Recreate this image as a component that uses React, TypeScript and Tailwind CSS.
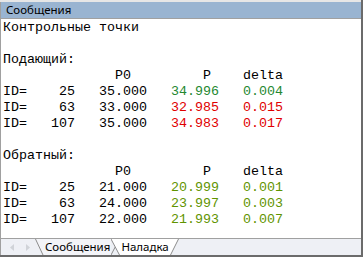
const GREEN = "text-[#23882f]";
const OLIVE = "text-[#5f9400]";
const RED = "text-[#e00000]";

type Row = { id: string; p0: string; p: string; d: string; c: string };

const feed: Row[] = [
  { id: "    25", p0: "35.000", p: "34.996", d: "0.004", c: GREEN },
  { id: "    63", p0: "33.000", p: "32.985", d: "0.015", c: RED },
  { id: "   107", p0: "35.000", p: "34.983", d: "0.017", c: RED },
];

const back: Row[] = [
  { id: "    25", p0: "21.000", p: "20.999", d: "0.001", c: OLIVE },
  { id: "    63", p0: "24.000", p: "23.997", d: "0.003", c: OLIVE },
  { id: "   107", p0: "22.000", p: "21.993", d: "0.007", c: OLIVE },
];

function Line({ children }: { children?: React.ReactNode }) {
  return <div className="h-[16px] whitespace-pre">{children ?? " "}</div>;
}

function Block({ title, rows }: { title: string; rows: Row[] }) {
  return (
    <>
      <Line>{title}</Line>
      <Line>{"              P0         P    delta"}</Line>
      {rows.map((r) => (
        <Line key={r.id}>
          {"ID=" + r.id + "   " + r.p0 + "   "}
          <span className={r.c}>{r.p}</span>
          {"   "}
          <span className={r.c}>{r.d}</span>
        </Line>
      ))}
    </>
  );
}

export default function App() {
  return (
    <div className="flex h-[257px] w-[363px] flex-col overflow-hidden border-r-2 border-b-2 border-[#6b6b6b] bg-white">
      <div className="h-[2px] bg-[#e6e6e6]" />
      <div className="flex h-[16px] items-center border-l border-[#a0a0a0] bg-[#99b4d1] pl-[5px] font-['Noto_Sans',sans-serif] text-[11.5px] leading-none text-black">
        Сообщения
      </div>
      <div className="h-[1px] bg-[#a0a0a0]" />

      <div className="flex-1 border-l border-[#a0a0a0] pt-[1px] pl-[2px] font-['Liberation_Mono',monospace] text-[13.33px] leading-[16px] text-black">
        <Line>Контрольные точки</Line>
        <Line />
        <Block title="Подающий:" rows={feed} />
        <Line />
        <Block title="Обратный:" rows={back} />
      </div>

      <div className="flex h-[17px] border-t border-l border-[#a0a0a0] bg-[#eef0f5] font-['Noto_Sans',sans-serif] text-[11.5px] text-black">
        <div className="flex w-[34px] items-center gap-[10px] pl-[9px]">
          <svg width="5" height="7" viewBox="0 0 5 7">
            <path d="M4 0 L0 3.5 L4 7 Z" fill="#d0d3d8" />
          </svg>
          <svg width="5" height="7" viewBox="0 0 5 7">
            <path d="M1 0 L5 3.5 L1 7 Z" fill="#d0d3d8" />
          </svg>
        </div>
        <svg width="9" height="16" viewBox="0 0 9 16" className="shrink-0">
          <path d="M0.5 0 L8 16 L9 16 L9 0 Z" fill="#f3f4f8" />
          <path d="M0.5 0 L8 16" stroke="#8c8c8c" strokeWidth="1" fill="none" />
        </svg>
        <span className="flex items-center bg-[#f3f4f8] px-[1px] leading-none">Сообщения</span>
        <svg width="9" height="16" viewBox="0 0 9 16" className="shrink-0">
          <path d="M0 0 L8.5 16 L9 16 L9 0 Z" fill="#ffffff" />
          <path d="M0 16 L4.2 8" stroke="#8c8c8c" strokeWidth="1" fill="none" />
          <path d="M0 0 L8.5 16" stroke="#8c8c8c" strokeWidth="1" fill="none" />
        </svg>
        <span className="flex items-center bg-white px-[1px] leading-none">Наладка</span>
        <svg width="9" height="16" viewBox="0 0 9 16" className="shrink-0">
          <path d="M0 0 L8.5 0 L0.5 16 L0 16 Z" fill="#ffffff" />
          <path d="M8.5 0 L0.5 16" stroke="#8c8c8c" strokeWidth="1" fill="none" />
        </svg>
      </div>
    </div>
  );
}
